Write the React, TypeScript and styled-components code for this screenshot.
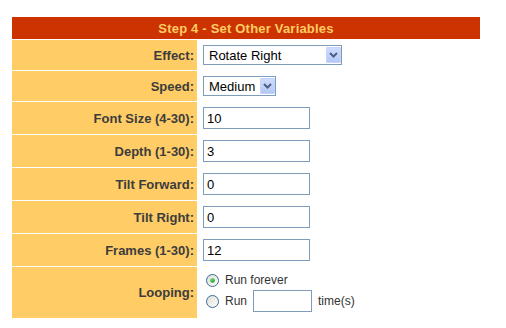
import React from 'react'
import styled, { createGlobalStyle } from 'styled-components'

const GlobalStyle = createGlobalStyle`
  body {
    margin: 0;
    background: #fff;
    font-family: 'Liberation Sans', Arial, sans-serif;
  }
`

const Page = styled.div`
  padding: 17px 0 0 12px;
`

const Table = styled.div`
  width: 468px;
  display: grid;
  grid-template-columns: 185px 1fr;
  row-gap: 1px;
  background: #fff;
`

const Header = styled.div`
  grid-column: 1 / -1;
  height: 22px;
  background: #cc3300;
  color: #ffcc66;
  font-size: 13px;
  font-weight: bold;
  letter-spacing: 0.2px;
  display: flex;
  align-items: center;
  justify-content: center;
`

const Label = styled.div<{ $h: number }>`
  height: ${(p) => p.$h}px;
  background: #ffcc66;
  color: #3c3c3c;
  font-size: 13px;
  font-weight: bold;
  display: flex;
  align-items: center;
  justify-content: flex-end;
  padding-right: 3px;
`

const Value = styled.div`
  display: flex;
  align-items: center;
  padding-left: 6px;
`

const SelectBox = styled.div<{ $w: number }>`
  box-sizing: border-box;
  width: ${(p) => p.$w}px;
  height: 20px;
  border: 1px solid #7f9db9;
  background: #fff;
  display: flex;
  align-items: center;
  padding: 1px 0 1px 5px;
  font-size: 13px;
  color: #000;
`

const SelectText = styled.span`
  flex: 1;
`

const DropButton = styled.span`
  box-sizing: border-box;
  width: 15px;
  height: 16px;
  border: 1px solid #c3d3fd;
  border-radius: 1px;
  background: linear-gradient(#cfdcfd, #b4c8f6);
  display: flex;
  align-items: center;
  justify-content: center;
`

const TextInput = styled.input<{ $w: number }>`
  box-sizing: border-box;
  width: ${(p) => p.$w}px;
  height: 22px;
  border: 1px solid #7f9db9;
  padding: 0 3px;
  font-family: 'Liberation Sans', Arial, sans-serif;
  font-size: 13px;
  color: #000;
  outline: none;
`

const LoopCell = styled.div`
  display: flex;
  flex-direction: column;
  justify-content: center;
  gap: 3px;
  padding-left: 9px;
`

const RadioLine = styled.label`
  display: flex;
  align-items: center;
  gap: 6px;
  font-size: 12px;
  color: #333;
`

const Select = ({ value, width }: { value: string; width: number }) => (
  <SelectBox $w={width}>
    <SelectText>{value}</SelectText>
    <DropButton>
      <svg width="9" height="6" viewBox="0 0 9 6">
        <path d="M1 1 L4.5 4.5 L8 1" fill="none" stroke="#4d6185" strokeWidth="2" />
      </svg>
    </DropButton>
  </SelectBox>
)

const Radio = ({ checked }: { checked?: boolean }) => (
  <svg width="13" height="13" viewBox="0 0 13 13">
    <defs>
      <linearGradient id="rfill" x1="0" y1="0" x2="1" y2="1">
        <stop offset="0" stopColor="#dcdcd6" />
        <stop offset="1" stopColor="#ffffff" />
      </linearGradient>
      <radialGradient id="rdot" cx="0.4" cy="0.35" r="0.6">
        <stop offset="0" stopColor="#6fe06f" />
        <stop offset="1" stopColor="#1f9a1f" />
      </radialGradient>
    </defs>
    <circle cx="6.5" cy="6.5" r="6" fill="url(#rfill)" stroke="#3c6b94" strokeWidth="1" />
    {checked && <circle cx="6.5" cy="6.5" r="2.3" fill="url(#rdot)" />}
  </svg>
)

const rows: { label: string; value: string }[] = [
  { label: 'Font Size (4-30):', value: '10' },
  { label: 'Depth (1-30):', value: '3' },
  { label: 'Tilt Forward:', value: '0' },
  { label: 'Tilt Right:', value: '0' },
  { label: 'Frames (1-30):', value: '12' },
]

const App: React.FC = () => {
  return (
    <>
      <GlobalStyle />
      <Page>
        <Table>
          <Header>Step 4 - Set Other Variables</Header>

          <Label $h={30}>Effect:</Label>
          <Value>
            <Select value="Rotate Right" width={139} />
          </Value>

          <Label $h={30}>Speed:</Label>
          <Value>
            <Select value="Medium" width={73} />
          </Value>

          {rows.map((r) => (
            <React.Fragment key={r.label}>
              <Label $h={32}>{r.label}</Label>
              <Value>
                <TextInput $w={107} defaultValue={r.value} />
              </Value>
            </React.Fragment>
          ))}

          <Label $h={51}>Looping:</Label>
          <LoopCell>
            <RadioLine>
              <Radio checked />
              Run forever
            </RadioLine>
            <RadioLine>
              <Radio />
              Run
              <TextInput $w={59} />
              time(s)
            </RadioLine>
          </LoopCell>
        </Table>
      </Page>
    </>
  )
}

export default App
